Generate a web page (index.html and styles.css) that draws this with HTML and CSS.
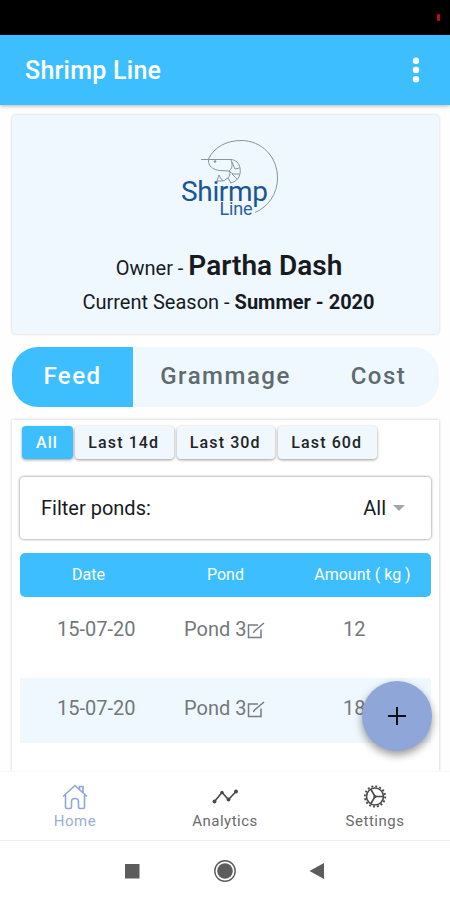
FILE: index.html
```html
<!DOCTYPE html>
<html lang="en">
<head>
  <meta charset="UTF-8">
  <meta name="viewport" content="width=device-width, initial-scale=1.0">
  <title>Shrimp Line</title>
  <link rel="stylesheet" href="styles.css">
</head>
<body>
  <div class="status-bar"><span class="battery"></span></div>

  <header class="toolbar">
    <span class="title">Shrimp Line</span>
    <svg class="menu-icon" width="8" height="26" viewBox="0 0 8 26" fill="#fff">
      <circle cx="4" cy="3.700" r="3.200"/><circle cx="4" cy="13" r="3.200"/><circle cx="4" cy="22.300" r="3.200"/>
    </svg>
  </header>

  <main class="content">
    <!-- Owner card -->
    <section class="owner-card">
      <svg class="logo" width="110" height="80" viewBox="175 138 110 80">
        <g fill="none" stroke="#8495a3" stroke-width="1">
          <path d="M208.500 159 C214 147 227 140.500 241 140.500 C262 140.500 277.500 157 277.500 178 C277.500 194 268 207 255 212.500"/>
          <path d="M201 159.500 H231 C236 160 239 163 240 168"/>
          <path d="M208.500 160 C208 166 213 170 220 170.500 L229 171 C232 169 233 165 231 160"/>
          <path d="M240 168 C241.500 176 237 182 230 183 M232 162 L235 169 L239.500 168 M229 171 L233 174 L239.500 174 M229 171 C231 175 229 178 226 179 M232 174 L237 179 M228 178 L231 183 M226 179 C223 183 221 179 219 175 L217 181 L223 181"/>
        </g>
        <circle cx="215" cy="161.500" r="1.300" fill="#8495a3"/>
        <text class="logo-name" x="181" y="200.500" textLength="87">Shirmp</text>
        <text class="logo-sub" x="219.500" y="214.500" textLength="33">Line</text>
      </svg>
      <p class="owner">Owner - <b>Partha Dash</b></p>
      <p class="season">Current Season - <b>Summer - 2020</b></p>
    </section>

    <nav class="segments">
      <button class="segment active">Feed</button>
      <button class="segment grammage">Grammage</button>
      <button class="segment cost">Cost</button>
    </nav>

    <!-- Feed list -->
    <section class="panel">
      <div class="chips">
        <button class="chip active">All</button>
        <button class="chip">Last 14d</button>
        <button class="chip">Last 30d</button>
        <button class="chip">Last 60d</button>
      </div>

      <div class="filter">
        <span class="filter-label">Filter ponds:</span>
        <span class="filter-value">All</span>
        <span class="caret"></span>
      </div>

      <div class="row table-head">
        <span>Date</span><span>Pond</span><span>Amount ( kg )</span>
      </div>
      <div class="row first">
        <span class="date">15-07-20</span>
        <span class="pond">Pond 3<svg width="18" height="18" viewBox="0 0 18 18"><path d="M11 3H1.500V15.500H14V7.500M7 9.500L17 1M7 9.500L6.500 11"/></svg></span>
        <span class="amount">12</span>
      </div>
      <div class="row striped">
        <span class="date">15-07-20</span>
        <span class="pond">Pond 3<svg width="18" height="18" viewBox="0 0 18 18"><path d="M11 3H1.500V15.500H14V7.500M7 9.500L17 1M7 9.500L6.500 11"/></svg></span>
        <span class="amount">18</span>
      </div>
    </section>

    <button class="fab">
      <svg width="20" height="20" viewBox="0 0 20 20"><path d="M10 1V19M1 10H19"/></svg>
    </button>
  </main>

  <nav class="tab-bar">
    <a class="tab selected">
      <svg width="28" height="28" viewBox="0 0 28 28">
        <path d="M2 13.500L14 2.500L26 13.500M4.500 12V24Q4.500 25.500 6 25.500H9Q10.500 25.500 10.500 24V18.500Q10.500 15.500 14 15.500Q17.500 15.500 17.500 18.500V24Q17.500 25.500 19 25.500H22Q23.500 25.500 23.500 24V12M18.500 6V3.500H22V9.500"/>
      </svg>
      <span>Home</span>
    </a>
    <a class="tab">
      <svg width="28" height="28" viewBox="0 0 28 28">
        <path d="M3.500 18.500L11 9.500L17.500 16.500L25 8.500"/>
        <g fill="#4a4a4a" stroke="none"><circle cx="3.500" cy="18.500" r="2"/><circle cx="11" cy="9.500" r="1.700"/><circle cx="17.500" cy="16.500" r="2"/><circle cx="25" cy="8.500" r="2"/></g>
      </svg>
      <span>Analytics</span>
    </a>
    <a class="tab">
      <svg width="28" height="28" viewBox="0 0 28 28">
        <circle cx="14" cy="13.500" r="8.500"/>
        <circle cx="14" cy="13.500" r="10.200" stroke-width="1.800" stroke-dasharray="2 2.006"/>
        <path d="M14 13.500H22.500M14 13.500L9.700 6M14 13.500L9.700 21"/>
        <circle cx="14" cy="13.500" r="1.600" fill="#4a4a4a" stroke="none"/>
      </svg>
      <span>Settings</span>
    </a>
  </nav>

  <div class="system-nav">
    <svg width="24" height="24" viewBox="0 0 24 24"><rect x="5" y="5" width="14.500" height="14.500" fill="#5c5c5c"/></svg>
    <svg width="24" height="24" viewBox="0 0 24 24"><circle cx="12" cy="12" r="10.200" fill="none" stroke="#5c5c5c" stroke-width="1.400"/><circle cx="12" cy="12" r="7.800" fill="#5c5c5c"/></svg>
    <svg width="24" height="24" viewBox="0 0 24 24"><path d="M3.500 12L18 4V20Z" fill="#5c5c5c"/></svg>
  </div>
</body>
</html>
```
FILE: styles.css
```css
* {
  box-sizing: border-box;
}

body {
  margin: 0;
  height: 900px;
  display: flex;
  flex-direction: column;
  overflow: hidden;
  background: #fefefe;
  font-family: Roboto, sans-serif;
  color: #171b1f;
}

button {
  border: none;
  padding: 0;
  font-family: inherit;
}

.status-bar {
  height: 35px;
  flex: none;
  display: flex;
  justify-content: flex-end;
  padding: 14px 10px 0 0;
  background: #000;
}

.battery {
  width: 3px;
  height: 7px;
  border-radius: 1px;
  background: #b51216;
}

.toolbar {
  height: 70px;
  flex: none;
  display: flex;
  align-items: center;
  justify-content: space-between;
  padding: 0 30px 0 25px;
  background: #3dbfff;
  box-shadow: 0 1px 4px rgba(0, 0, 0, 0.3);
}

.title {
  font-size: 25px;
  font-weight: 500;
  letter-spacing: 0.25px;
  color: #fff;
}

.content {
  position: relative;
  flex: 1;
  min-height: 0;
  display: flex;
  flex-direction: column;
  padding: 10px 11px 0 12px;
}

/* owner card */
.owner-card {
  height: 219px;
  flex: none;
  display: flex;
  flex-direction: column;
  align-items: center;
  padding-top: 23px;
  background: #eff8ff;
  border-radius: 4px;
  box-shadow: 0 0 3px rgba(0, 0, 0, 0.2);
}

.logo {
  margin-left: 8px;
}

.logo-name {
  font-size: 28px;
  fill: #1b5694;
}

.logo-sub {
  font-size: 18px;
  fill: #2a619b;
}

.owner,
.season {
  margin: 0;
  font-size: 20px;
  white-space: nowrap;
}

.owner {
  margin-top: 30px;
  line-height: 36px;
  padding-left: 7px;
}

.owner b {
  font-size: 28px;
  font-weight: 600;
}

.season {
  line-height: 32px;
  padding-left: 6px;
}

.season b {
  font-weight: 700;
}

/* Feed / Grammage / Cost */
.segments {
  height: 60px;
  flex: none;
  display: flex;
  margin-top: 13px;
  border-radius: 26px;
  overflow: hidden;
  background: #eff8ff;
}

.segment {
  width: 121px;
  padding-bottom: 2px;
  background: none;
  font-size: 24px;
  font-weight: 500;
  letter-spacing: 1.5px;
  color: #606a71;
}

.segment.active {
  background: #3dbfff;
  color: #fff;
}

.segment.grammage {
  width: 185px;
}

/* feed list */
.panel {
  flex: 1;
  min-height: 0;
  margin-top: 13px;
  padding: 6px 8px 0;
  background: #fff;
  overflow: hidden;
  box-shadow: 0 0 3px rgba(0, 0, 0, 0.22);
}

.chips {
  display: flex;
  gap: 3px;
  padding-left: 2px;
}

.chip {
  width: 98.5px;
  height: 33px;
  padding-right: 1px;
  padding-bottom: 1px;
  border-radius: 4px;
  background: #f0f7fd;
  box-shadow: 0 1px 3px rgba(0, 0, 0, 0.4);
  font-size: 16px;
  font-weight: 500;
  letter-spacing: 1.1px;
  color: #202428;
}

.chip.active {
  width: 51px;
  margin-right: -1px;
  background: #3dbfff;
  color: #fff;
}

.filter {
  height: 62px;
  display: flex;
  align-items: center;
  margin-top: 18px;
  padding: 0 26px 0 21px;
  border-radius: 4px;
  background: #fff;
  box-shadow: 0 0 3px rgba(0, 0, 0, 0.55);
  font-size: 20px;
}

.filter-value {
  margin-left: auto;
  margin-right: 7px;
}

.caret {
  border: 6px solid transparent;
  border-top-color: #a5a5a5;
  border-bottom: 0;
}

.row {
  height: 65px;
  display: grid;
  grid-template-columns: 137px 137px 1fr;
  align-items: center;
  font-size: 20px;
  color: #74787b;
}

.table-head {
  height: 44px;
  margin-top: 14px;
  padding-bottom: 1px;
  border-radius: 5px;
  background: #3dbfff;
  font-size: 16px;
  text-align: center;
  color: #fff;
}

.first {
  padding-top: 4px;
}

.striped {
  margin-top: 16px;
  background: #eff8ff;
}

.date {
  padding: 0 0 5px 37px;
}

.pond {
  display: flex;
  align-items: center;
  padding: 0 0 5px 27px;
  white-space: nowrap;
}

.pond svg {
  margin: 4px 0 0 1px;
  fill: none;
  stroke: #777c80;
  stroke-width: 1.5;
}

.amount {
  padding: 0 0 5px 49px;
}

.fab {
  position: absolute;
  right: 18px;
  bottom: 20px;
  width: 70px;
  height: 70px;
  display: flex;
  align-items: center;
  justify-content: center;
  border-radius: 50%;
  background: #8fa6d8;
  box-shadow: 0 4px 8px rgba(0, 0, 0, 0.4);
}

.fab svg {
  stroke: #111;
  stroke-width: 2;
}

/* bottom tabs */
.tab-bar {
  position: relative;
  height: 70px;
  flex: none;
  display: flex;
  background: #fff;
  border-top: 1px solid #f8f8f8;
  border-bottom: 1px solid #f0f0f0;
}

.tab {
  flex: 1;
  display: flex;
  flex-direction: column;
  align-items: center;
  padding-top: 11px;
  font-size: 15px;
  line-height: 20px;
  letter-spacing: 0.5px;
  color: #6b6b6b;
}

.tab svg {
  fill: none;
  stroke: #4a4a4a;
  stroke-width: 1.6;
}

.tab.selected {
  color: #9daed2;
}

.tab.selected svg {
  stroke: #8fa6d8;
}

.system-nav {
  height: 59px;
  flex: none;
  display: flex;
  align-items: center;
  justify-content: center;
  gap: 69px;
  background: #fff;
}
```
